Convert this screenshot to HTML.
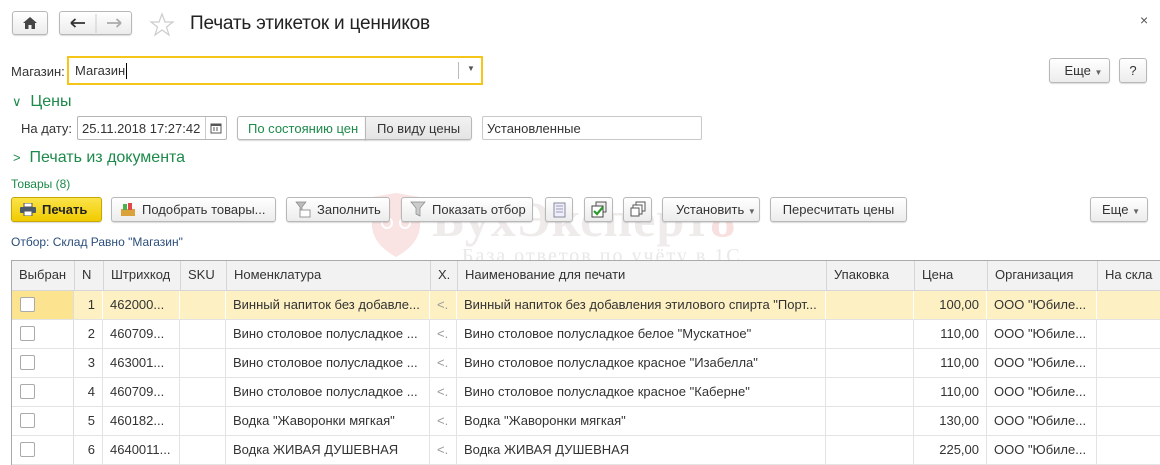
<!DOCTYPE html>
<html><head><meta charset="utf-8"><style>
*{box-sizing:border-box;margin:0;padding:0}
body{width:1160px;height:465px;overflow:hidden;background:#fff;font-family:"Liberation Sans",Arial,sans-serif;font-size:13px;color:#333;position:relative}
.a{position:absolute}
.btn{position:absolute;height:25px;border:1px solid #b8b8b8;border-radius:3px;background:linear-gradient(#fff,#ececec);box-shadow:0 1px 1px rgba(0,0,0,.15);font-size:13px;color:#333;line-height:23px;white-space:nowrap}
.g{color:#1c8a4a}
.tbl{position:absolute;left:11px;top:260px;width:1160px;border-top:1px solid #aaa;border-left:1px solid #aaa}
.row{position:absolute;left:0;height:29px;width:1150px;border-bottom:1px solid #e3e3e3}
.c{position:absolute;top:0;height:100%;line-height:28px;white-space:nowrap;overflow:hidden;padding-left:7px;border-right:1px solid #e3e3e3}
.hd .c{border-right:1px solid #d6d6d6}
.cb{position:absolute;left:9px;top:6px;width:15px;height:15px;border:1px solid #aaa;border-radius:2px;background:#fff}
</style></head><body>
<svg class="a" style="left:370px;top:193px" width="52" height="66"><path d="M2 4 L26 0 L50 4 L50 34 Q48 52 26 64 Q4 52 2 34Z" fill="#f9e3e3"/><circle cx="17" cy="30" r="5" fill="none" stroke="#fff" stroke-width="2"/><circle cx="35" cy="30" r="5" fill="none" stroke="#fff" stroke-width="2"/></svg>
<div class="a" style="left:432px;top:190px;font-family:'Liberation Serif',serif;font-weight:bold;font-size:50px;color:#f0ebeb;letter-spacing:1px">БухЭксперт<span style="color:#f9e0e0">8</span></div>
<div class="a" style="left:462px;top:245px;font-family:'Liberation Serif',serif;font-size:20px;color:#e8e8e8;letter-spacing:2px">База ответов по учёту в 1С</div>

<div class="btn" style="left:12px;top:11px;width:36px;height:24px"><svg width="34" height="22"><path d="M17 5 L10 11 H12 V17 H15.5 V13 H18.5 V17 H22 V11 H24Z" fill="#444"/></svg></div>
<div class="btn" style="left:59px;top:11px;width:73px;height:24px"><svg width="72" height="22"><path d="M11 11 H25 M11 11 L15.5 7 M11 11 L15.5 15" stroke="#333" stroke-width="1.8" fill="none"/><line x1="36" y1="2" x2="36" y2="21" stroke="#ccc"/><path d="M47 11 H61 M61 11 L56.5 7 M61 11 L56.5 15" stroke="#aaa" stroke-width="1.8" fill="none"/></svg></div>
<svg class="a" style="left:149px;top:12px" width="26" height="24"><path d="M13 2 L16 10 L24 10 L17.5 15 L20 23 L13 18 L6 23 L8.5 15 L2 10 L10 10Z" fill="none" stroke="#ccc" stroke-width="1.2"/></svg>
<div class="a" style="left:190px;top:13px;font-size:19px;color:#222;letter-spacing:-0.2px">Печать этикеток и ценников</div>
<div class="a" style="left:1140px;top:12px;font-size:14px;color:#555">×</div>

<div class="a" style="left:11px;top:64px">Магазин:</div>
<div class="a" style="left:67px;top:56px;width:416px;height:29px;border:2px solid #f5c518;background:#fff"><span class="a" style="left:6px;top:5px">Магазин</span><span class="a" style="left:57px;top:5px;width:1px;height:16px;background:#000"></span><span class="a" style="left:389px;top:4px;width:1px;height:17px;background:#bbb"></span><span class="a" style="left:398px;top:6px;font-size:8px;color:#555">▼</span></div>
<div class="btn" style="left:1049px;top:58px;width:61px">&nbsp;&nbsp;&nbsp;&nbsp;Еще <span style="font-size:8px;color:#666">▼</span></div>
<div class="btn" style="left:1119px;top:58px;width:28px;text-align:center">?</div>

<div class="a g" style="left:12px;top:93px;font-size:16px"><span style="font-size:13px">∨</span>&nbsp; Цены</div>
<div class="a" style="left:21px;top:121px">На дату:</div>
<div class="a" style="left:77px;top:116px;width:150px;height:24px;border:1px solid #b5b5b5;border-radius:2px;background:#fff"><span class="a" style="left:4px;top:4px">25.11.2018 17:27:42</span><span class="a" style="left:127px;top:0;width:1px;height:22px;background:#ccc"></span><svg class="a" style="left:132px;top:5px" width="12" height="12"><rect x="1" y="2" width="10" height="9" fill="none" stroke="#555"/><rect x="1" y="2" width="10" height="2" fill="#555"/><path d="M3 6h2M6 6h2M3 8h2M6 8h2" stroke="#555"/></svg></div>
<div class="btn g" style="left:237px;top:116px;width:129px;height:24px;background:#fff;border-radius:3px 0 0 3px;padding-left:10px;color:#1c8a4a">По состоянию цен</div>
<div class="btn" style="left:365px;top:116px;width:107px;height:24px;border-radius:0 3px 3px 0;padding-left:11px;background:linear-gradient(#f2f2f2,#e4e4e4)">По виду цены</div>
<div class="a" style="left:482px;top:116px;width:220px;height:24px;border:1px solid #c8c8c8;border-radius:2px;padding:4px 0 0 4px">Установленные</div>

<div class="a g" style="left:13px;top:149px;font-size:16px"><span style="font-size:13px">&gt;</span>&nbsp; Печать из документа</div>
<div class="a g" style="left:11px;top:177px;font-size:12px">Товары (8)</div>

<div class="btn" style="left:11px;top:197px;width:91px;background:linear-gradient(#fbe348,#f1cc00);border-color:#c8a800;font-weight:bold;color:#222;padding-left:30px"><svg class="a" style="left:8px;top:5px" width="16" height="13"><rect x="4" y="0" width="8" height="4" fill="#fff" stroke="#555"/><rect x="0" y="4" width="16" height="6" rx="1" fill="#4a5a6a"/><rect x="4" y="8" width="8" height="5" fill="#fff" stroke="#555"/></svg>Печать</div>
<div class="btn" style="left:111px;top:197px;width:165px;padding-left:30px"><svg class="a" style="left:8px;top:4px" width="16" height="15"><rect x="1" y="7" width="14" height="7" fill="#d9a23a"/><rect x="3" y="2" width="4" height="6" fill="#4caf50"/><rect x="8" y="1" width="4" height="7" fill="#e04848"/></svg>Подобрать товары...</div>
<div class="btn" style="left:286px;top:197px;width:104px;padding-left:30px"><svg class="a" style="left:8px;top:3px" width="16" height="17"><path d="M1 1h10l-4 5v4l-2 1v-5z" fill="#bbb" stroke="#888" stroke-width=".7"/><rect x="5" y="9" width="10" height="7" fill="#fff" stroke="#999"/></svg>Заполнить</div>
<div class="btn" style="left:401px;top:197px;width:132px;padding-left:30px"><svg class="a" style="left:8px;top:3px" width="16" height="17"><path d="M1 1h14l-5 6v8l-4-2v-6z" fill="#ccc" stroke="#888" stroke-width=".7"/></svg>Показать отбор</div>
<div class="btn" style="left:545px;top:197px;width:28px"><svg class="a" style="left:7px;top:4px" width="14" height="16"><rect x="1" y="1" width="11" height="14" fill="#eef" stroke="#889"/><path d="M3 4h7M3 7h7M3 10h7" stroke="#99a"/></svg></div>
<div class="btn" style="left:584px;top:197px;width:29px"><svg class="a" style="left:6px;top:3px" width="17" height="17"><rect x="5" y="1" width="10" height="10" fill="#eee" stroke="#555"/><rect x="1" y="5" width="11" height="11" fill="#fff" stroke="#444"/><path d="M3 10l3 3 6-7" stroke="#2a9a2a" stroke-width="2.2" fill="none"/></svg></div>
<div class="btn" style="left:623px;top:197px;width:29px"><svg class="a" style="left:6px;top:3px" width="17" height="17"><rect x="6" y="1" width="9" height="9" fill="#fff" stroke="#555"/><rect x="3" y="4" width="9" height="9" fill="#fff" stroke="#555"/><rect x="1" y="7" width="8" height="8" fill="#fff" stroke="#555"/></svg></div>
<div class="btn" style="left:662px;top:197px;width:98px;padding-left:13px">Установить <span style="font-size:8px;color:#666">▼</span></div>
<div class="btn" style="left:770px;top:197px;width:137px;text-align:center">Пересчитать цены</div>
<div class="btn" style="left:1090px;top:197px;width:58px;padding-left:11px">Еще <span style="font-size:8px;color:#666">▼</span></div>

<div class="a" style="left:11px;top:235px;font-size:12px;color:#2a4d7a">Отбор: Склад Равно "Магазин"</div>

<div class="tbl">
<div class="row hd" style="top:0;background:#f2f2f2;border-bottom:1px solid #d6d6d6;height:30px">
<div class="c" style="left:0;width:63px">Выбран</div>
<div class="c" style="left:63px;width:29px">N</div>
<div class="c" style="left:92px;width:77px">Штрихкод</div>
<div class="c" style="left:169px;width:46px">SKU</div>
<div class="c" style="left:215px;width:204px">Номенклатура</div>
<div class="c" style="left:419px;width:27px">Х.</div>
<div class="c" style="left:446px;width:369px">Наименование для печати</div>
<div class="c" style="left:815px;width:88px">Упаковка</div>
<div class="c" style="left:903px;width:73px">Цена</div>
<div class="c" style="left:976px;width:110px">Организация</div>
<div class="c" style="left:1086px;width:64px;border:0">На скла</div>
</div>
</div>
<div id="rows"></div>
<script>
var d=[["1","462000...","Винный напиток без добавле...","Винный напиток без добавления этилового спирта \"Порт...","100,00"],
["2","460709...","Вино столовое полусладкое ...","Вино столовое полусладкое белое \"Мускатное\"","110,00"],
["3","463001...","Вино столовое полусладкое ...","Вино столовое полусладкое красное \"Изабелла\"","110,00"],
["4","460709...","Вино столовое полусладкое ...","Вино столовое полусладкое красное \"Каберне\"","110,00"],
["5","460182...","Водка \"Жаворонки мягкая\"","Водка \"Жаворонки мягкая\"","130,00"],
["6","4640011...","Водка ЖИВАЯ ДУШЕВНАЯ","Водка ЖИВАЯ ДУШЕВНАЯ","225,00"]];
var h="";
d.forEach(function(r,i){
var sel=i==0;
var s='style="border-right-color:'+(sel?'#fff':'#e3e3e3')+';';
h+='<div class="row" style="left:11px;top:'+(291+i*29)+'px;height:29px;background:'+(sel?'#fdf0c3':'#fff')+'">'+
'<div class="c" '+s+'left:0;width:63px;border-right-color:#ddd;'+(sel?'background:#fbe38f':'')+'"><span class="cb"></span></div>'+
'<div class="c" '+s+'left:63px;width:29px;text-align:right;padding-right:7px">'+r[0]+'</div>'+
'<div class="c" '+s+'left:92px;width:77px">'+r[1]+'</div>'+
'<div class="c" '+s+'left:169px;width:46px"></div>'+
'<div class="c" '+s+'left:215px;width:204px">'+r[2]+'</div>'+
'<div class="c" '+s+'left:419px;width:27px;color:#999">&lt;.</div>'+
'<div class="c" '+s+'left:446px;width:369px">'+r[3]+'</div>'+
'<div class="c" '+s+'left:815px;width:88px"></div>'+
'<div class="c" '+s+'left:903px;width:73px;text-align:right;padding-right:7px">'+r[4]+'</div>'+
'<div class="c" '+s+'left:976px;width:110px">ООО "Юбиле...</div>'+
'<div class="c" '+s+'left:1086px;width:64px;border:0"></div></div>';});
h+='<div class="a" style="left:11px;top:260px;width:1px;height:205px;background:#aaa"></div>';
document.getElementById("rows").innerHTML=h;
</script>
</body></html>
